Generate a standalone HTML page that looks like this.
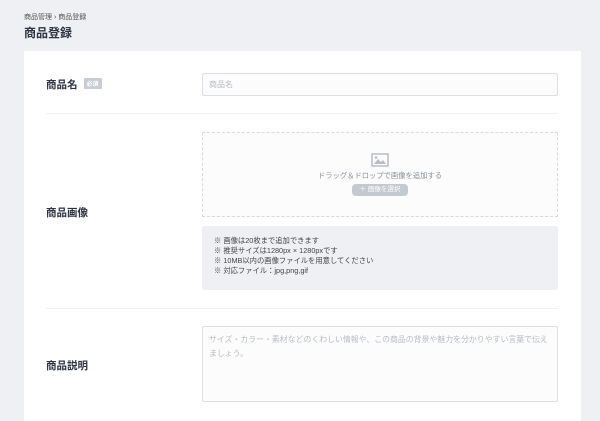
<!DOCTYPE html>
<html><head><meta charset="utf-8"><style>
*{margin:0;padding:0;box-sizing:border-box}
html,body{width:600px;height:421px;overflow:hidden}
body{background:#eff0f4;font-family:"Liberation Sans","Noto Sans CJK JP",sans-serif;position:relative;color:#333}
.a{position:absolute}
.bc{left:24px;top:12px;font-size:7px;color:#555}
.h1{left:24px;top:24px;font-size:12px;font-weight:bold;color:#2d3340}
.card{left:24px;top:51px;width:557px;height:370px;background:#fff}
.lbl{font-size:10.5px;font-weight:bold;color:#2d3340}
.tag{display:inline-block;background:#c8ccd4;color:#fff;font-size:6px;padding:1px 3px;margin-left:6px;vertical-align:2px;border-radius:1px}
.hr{left:46px;width:512px;height:1px;background:#f0f1f4}
.inp{left:202px;width:356px;border:1px solid #dcdfe6;border-radius:2px;background:#fcfcfd;font-size:8px;color:#b8bcc5;padding:0 6px}
</style></head><body>
<div class="a bc">商品管理 › 商品登録</div>
<div class="a h1">商品登録</div>
<div class="a card"></div>
<div class="a lbl" style="left:46px;top:77px">商品名<span class="tag">必須</span></div>
<div class="a inp" style="top:73px;height:23px;line-height:21px">商品名</div>
<div class="a hr" style="top:113px"></div>
<div class="a lbl" style="left:46px;top:205px">商品画像</div>
<div class="a" style="left:202px;top:132px;width:356px;height:85px;border:1px dashed #d8dae2;background:#fcfcfd"></div>
<svg class="a" style="left:371px;top:153px" width="18" height="14" viewBox="0 0 18 14"><rect x="1" y="1" width="16" height="12" fill="none" stroke="#b8bcc6" stroke-width="1.5"/><path d="M3 11 L7 6 L10 9 L12 7 L15 11 Z" fill="#b8bcc6"/><circle cx="5" cy="4.5" r="1.3" fill="#b8bcc6"/></svg>
<div class="a" style="left:202px;top:171px;width:356px;text-align:center;font-size:7.3px;color:#8a8f99">ドラッグ＆ドロップで画像を追加する</div>
<div class="a" style="left:352px;top:184px;width:56px;height:12px;border-radius:4px;background:#c4c8d0;color:#fff;font-size:6.5px;text-align:center;line-height:12px">＋ 画像を選択</div>
<div class="a" style="left:202px;top:226px;width:356px;height:64px;background:#eff0f4;border-radius:2px;font-size:7.3px;color:#444;padding:10px 0 0 12px;line-height:10px">※ 画像は20枚まで追加できます<br>※ 推奨サイズは1280px × 1280pxです<br>※ 10MB以内の画像ファイルを用意してください<br>※ 対応ファイル：jpg,png,gif</div>
<div class="a hr" style="top:308px"></div>
<div class="a lbl" style="left:46px;top:358px">商品説明</div>
<div class="a inp" style="top:326px;height:76px;padding:6px 6px;line-height:14px;font-size:7.9px">サイズ・カラー・素材などのくわしい情報や、この商品の背景や魅力を分かりやすい言葉で伝えましょう。</div>
</body></html>
